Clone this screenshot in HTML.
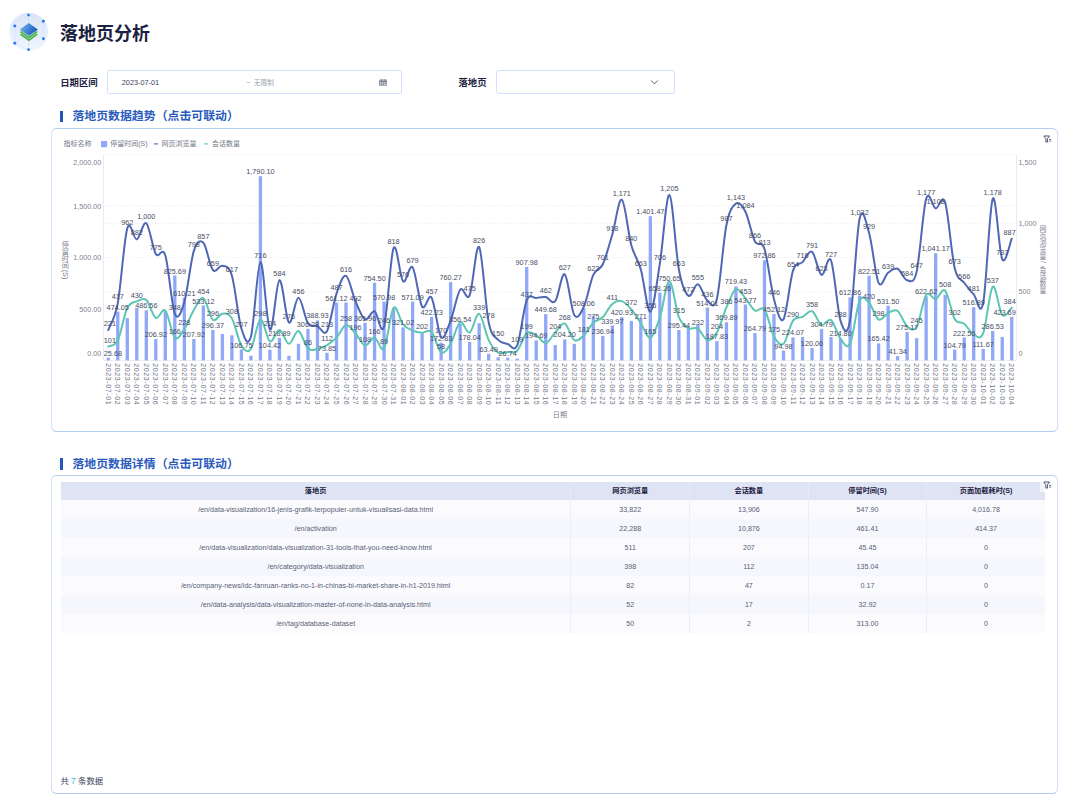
<!DOCTYPE html>
<html lang="zh-CN"><head><meta charset="utf-8"><title>落地页分析</title>
<style>
html,body{margin:0;padding:0;background:#fff}
body{width:1080px;height:802px;position:relative;overflow:hidden;font-family:"Liberation Sans", "Noto Sans CJK SC", sans-serif;color:#1b2242}
.abs{position:absolute}
.title{left:60px;top:21.4px;font-size:18px;font-weight:700;line-height:27px;color:#1b2140;white-space:nowrap;letter-spacing:0}
.flabel{font-size:9.4px;font-weight:700;color:#1b2140;line-height:22px;top:71.8px;white-space:nowrap}
.box{box-sizing:border-box;border:1.5px solid #d3defa;border-radius:2.5px;background:#fff;height:24px;top:69.9px}
.sect{font-size:11.9px;font-weight:700;color:#2a5bbd;white-space:nowrap;line-height:14px}
.sbar{width:3px;height:11.2px;background:#2456b8}
.card{box-sizing:border-box;border:1px solid #d0e0f6;border-top-color:#b1cdf0;border-bottom-color:#b1cdf0;border-radius:5.5px;background:#fff;left:51px;width:1006.6px}
.tbl{position:absolute;left:60.8px;top:481.8px;width:984.1px}
.tr{display:flex;height:18.95px}
.tr.th{height:18.3px;background:#dfe4f5;font-weight:700;color:#1b2140}
.tr.odd{background:#fbfbfe}
.tr.even{background:#f6f7fc}
.c{box-sizing:border-box;padding-top:1.4px;text-align:center;font-size:7.15px;line-height:18.95px;color:#585e76;white-space:nowrap;border-left:1px solid #eceef8;width:118.6px}
.th .c{padding-top:0;color:#1b2140;line-height:18.3px;font-size:7.2px;border-left-color:#e6eaf7}
.c0{width:509.7px;border-left:none}
.tr .c4{width:118.6px}
.total{left:60.4px;top:776.2px;font-size:8.4px;line-height:10px;color:#3a405a;white-space:nowrap}
.total b{font-weight:400;color:#3fb3d3}
</style></head><body>

<!-- logo -->
<svg class="abs" style="left:8px;top:11px" width="42" height="42" viewBox="0 0 42 42">
<defs>
<linearGradient id="lg0" x1="0" y1="0" x2="0" y2="1"><stop offset="0" stop-color="#dae6f9"/><stop offset="0.55" stop-color="#e6eefb"/><stop offset="1" stop-color="#f2f7fe"/></linearGradient>
<linearGradient id="lg1" x1="0" y1="0.3" x2="1" y2="0.7"><stop offset="0" stop-color="#74aeec"/><stop offset="0.55" stop-color="#3b7dd6"/><stop offset="1" stop-color="#1b4fb0"/></linearGradient>
</defs>
<circle cx="20.7" cy="21" r="19.3" fill="url(#lg0)"/>
<g stroke="#c6dcf9" stroke-width="0.45" fill="none" opacity="0.9"><path d="M20.55 4.1L35.4 10.3V27.7M6.8 15V32.3L20.55 38.6"/><path d="M20.55 19V4.1M20.55 21L35.4 27.7M20.55 21L6.8 32.3M20.55 19L35.4 10.3M20.55 19L6.8 15M20.55 21V38.6"/></g>
<g fill="#2577f4"><circle cx="20.55" cy="4.1" r="1.45"/><circle cx="35.4" cy="10.3" r="1.45"/><circle cx="35.4" cy="27.7" r="1.45"/><circle cx="20.55" cy="38.6" r="1.45"/><circle cx="6.8" cy="32.3" r="1.45"/><circle cx="6.8" cy="15" r="1.45"/></g>
<path d="M20.85 17.35l9 6.45-9 6.45-9-6.45z" fill="#45b04a"/>
<path d="M20.85 15.3l9 6.45-9 6.45-9-6.45z" fill="#c4e8c6"/>
<path d="M20.85 14.65l9 6.45-9 6.45-9-6.45z" fill="#45b04a"/>
<path d="M20.85 12.6l9 6.45-9 6.45-9-6.45z" fill="#d5ecd9"/>
<path d="M20.85 11.95l9 6.45-9 6.45-9-6.45z" fill="url(#lg1)"/>
</svg>
<div class="abs title">落地页分析</div>

<!-- filters -->
<div class="abs flabel" style="left:60.2px">日期区间</div>
<div class="abs box" style="left:107.1px;width:295.1px"></div>
<div class="abs" style="left:121.8px;top:72.3px;line-height:22px;font-size:7.3px;color:#3a405a">2023-07-01</div>
<div class="abs" style="left:246.2px;top:72.1px;line-height:22px;font-size:6.7px;color:#9a9fae;white-space:nowrap">~ &nbsp;无限制</div>
<svg class="abs" style="left:379px;top:78.6px" width="8.4" height="7.8" viewBox="0 0 8.4 7.8"><rect x="0.6" y="1" width="7.2" height="6.1" rx="0.7" fill="#c9ccd6" stroke="#7d8296" stroke-width="0.9"/><path d="M0.6 2.6h7.2" stroke="#7d8296" stroke-width="1.2"/><path d="M2.4 0.2v1.6M6 0.2v1.6" stroke="#7d8296" stroke-width="0.9"/><path d="M2 4.3h1.3M3.9 4.3h1.3M5.6 4.3h1.1M2 5.7h1.3M3.9 5.7h1.3" stroke="#6f7488" stroke-width="0.7"/></svg>
<div class="abs flabel" style="left:458.4px">落地页</div>
<div class="abs box" style="left:495.5px;width:179.3px"></div>
<svg class="abs" style="left:649.8px;top:79px" width="9" height="7" viewBox="0 0 9 7"><path d="M1.3 1.5l3.2 3.4 3.2-3.4" fill="none" stroke="#555b73" stroke-width="1.0"/></svg>

<!-- section 1 -->
<div class="abs sbar" style="left:60.3px;top:110.7px"></div>
<div class="abs sect" style="left:72.4px;top:109.2px">落地页数据趋势（点击可联动）</div>
<div class="abs card" style="top:128px;height:303.9px"></div>
<div class="abs" style="left:1043.2px;top:135px;line-height:0"><svg width="9" height="8.4" viewBox="0 0 9 8.4"><path d="M0.8 1h5.7L4.45 3.7v3.4H2.85V3.7z" fill="none" stroke="#4f5573" stroke-width="1" stroke-linejoin="round"/><path d="M6.1 4.4h2.1M6.1 6.1h2.1" stroke="#4f5573" stroke-width="0.85" fill="none"/></svg></div>
<svg class="chart" width="1080" height="802" viewBox="0 0 1080 802" style="position:absolute;left:0;top:0" font-family='&quot;Liberation Sans&quot;, &quot;Noto Sans CJK SC&quot;, sans-serif'>
<g stroke="#e3e5ea" stroke-width="0.6" stroke-dasharray="1.6 1.6" fill="none">
<line x1="103.5" x2="1016.5" y1="308.95" y2="308.95"/>
<line x1="103.5" x2="1016.5" y1="257.50" y2="257.50"/>
<line x1="103.5" x2="1016.5" y1="206.05" y2="206.05"/>
<line x1="103.5" x2="1016.5" y1="154.60" y2="154.60"/>
<line x1="103.5" x2="1016.5" y1="291.80" y2="291.80"/>
<line x1="103.5" x2="1016.5" y1="223.20" y2="223.20"/>
</g>
<g stroke="#dfe2ea" stroke-width="0.7" fill="none"><line x1="103.5" x2="103.5" y1="154.6" y2="360.4"/><line x1="1016.5" x2="1016.5" y1="154.6" y2="360.4"/><line x1="103.5" x2="1016.5" y1="360.4" y2="360.4"/></g>
<g fill="#8fa8f7">
<rect x="106.61" y="357.76" width="3.3" height="2.64"/>
<rect x="116.12" y="311.62" width="3.3" height="48.78"/>
<rect x="125.63" y="318.11" width="3.3" height="42.29"/>
<rect x="135.14" y="307.92" width="3.3" height="52.48"/>
<rect x="144.65" y="310.33" width="3.3" height="50.07"/>
<rect x="154.16" y="339.11" width="3.3" height="21.29"/>
<rect x="163.67" y="311.21" width="3.3" height="49.19"/>
<rect x="173.18" y="275.44" width="3.3" height="84.96"/>
<rect x="182.69" y="297.61" width="3.3" height="62.79"/>
<rect x="192.20" y="339.01" width="3.3" height="21.39"/>
<rect x="201.71" y="305.54" width="3.3" height="54.86"/>
<rect x="211.22" y="329.90" width="3.3" height="30.50"/>
<rect x="220.73" y="334.06" width="3.3" height="26.34"/>
<rect x="230.24" y="335.29" width="3.3" height="25.11"/>
<rect x="239.75" y="349.42" width="3.3" height="10.98"/>
<rect x="249.26" y="355.77" width="3.3" height="4.63"/>
<rect x="258.77" y="176.20" width="3.3" height="184.20"/>
<rect x="268.28" y="349.66" width="3.3" height="10.74"/>
<rect x="277.79" y="337.88" width="3.3" height="22.52"/>
<rect x="287.30" y="355.77" width="3.3" height="4.63"/>
<rect x="296.81" y="343.83" width="3.3" height="16.57"/>
<rect x="306.32" y="328.88" width="3.3" height="31.52"/>
<rect x="315.83" y="320.38" width="3.3" height="40.02"/>
<rect x="325.34" y="352.80" width="3.3" height="7.60"/>
<rect x="334.86" y="302.66" width="3.3" height="57.74"/>
<rect x="344.37" y="302.47" width="3.3" height="57.93"/>
<rect x="353.88" y="298.66" width="3.3" height="61.74"/>
<rect x="363.39" y="322.74" width="3.3" height="37.66"/>
<rect x="372.90" y="282.76" width="3.3" height="77.64"/>
<rect x="382.41" y="301.65" width="3.3" height="58.75"/>
<rect x="391.92" y="308.95" width="3.3" height="51.45"/>
<rect x="401.43" y="327.37" width="3.3" height="33.03"/>
<rect x="410.94" y="301.63" width="3.3" height="58.77"/>
<rect x="420.45" y="333.13" width="3.3" height="27.27"/>
<rect x="429.96" y="316.95" width="3.3" height="43.45"/>
<rect x="439.47" y="342.62" width="3.3" height="17.78"/>
<rect x="448.98" y="282.17" width="3.3" height="78.23"/>
<rect x="458.49" y="323.71" width="3.3" height="36.69"/>
<rect x="468.00" y="342.08" width="3.3" height="18.32"/>
<rect x="477.51" y="323.15" width="3.3" height="37.25"/>
<rect x="487.02" y="353.87" width="3.3" height="6.53"/>
<rect x="496.53" y="357.31" width="3.3" height="3.09"/>
<rect x="506.04" y="357.65" width="3.3" height="2.75"/>
<rect x="515.55" y="358.65" width="3.3" height="1.75"/>
<rect x="525.06" y="266.97" width="3.3" height="93.43"/>
<rect x="534.57" y="340.37" width="3.3" height="20.03"/>
<rect x="544.08" y="314.13" width="3.3" height="46.27"/>
<rect x="553.59" y="345.07" width="3.3" height="15.33"/>
<rect x="563.11" y="339.39" width="3.3" height="21.01"/>
<rect x="572.62" y="343.83" width="3.3" height="16.57"/>
<rect x="582.13" y="308.12" width="3.3" height="52.28"/>
<rect x="591.64" y="316.26" width="3.3" height="44.14"/>
<rect x="601.15" y="336.02" width="3.3" height="24.38"/>
<rect x="610.66" y="325.42" width="3.3" height="34.98"/>
<rect x="620.17" y="317.09" width="3.3" height="43.31"/>
<rect x="629.68" y="320.89" width="3.3" height="39.51"/>
<rect x="639.19" y="318.11" width="3.3" height="42.29"/>
<rect x="648.70" y="216.19" width="3.3" height="144.21"/>
<rect x="658.21" y="292.67" width="3.3" height="67.73"/>
<rect x="667.72" y="283.16" width="3.3" height="77.24"/>
<rect x="677.23" y="330.00" width="3.3" height="30.40"/>
<rect x="686.74" y="328.19" width="3.3" height="32.21"/>
<rect x="696.25" y="325.00" width="3.3" height="35.40"/>
<rect x="705.76" y="307.51" width="3.3" height="52.89"/>
<rect x="715.27" y="341.07" width="3.3" height="19.33"/>
<rect x="724.78" y="322.34" width="3.3" height="38.06"/>
<rect x="734.29" y="286.37" width="3.3" height="74.03"/>
<rect x="743.80" y="304.45" width="3.3" height="55.95"/>
<rect x="753.31" y="333.15" width="3.3" height="27.25"/>
<rect x="762.82" y="260.29" width="3.3" height="100.11"/>
<rect x="772.33" y="313.88" width="3.3" height="46.52"/>
<rect x="781.84" y="350.63" width="3.3" height="9.77"/>
<rect x="791.36" y="337.34" width="3.3" height="23.06"/>
<rect x="800.87" y="336.94" width="3.3" height="23.46"/>
<rect x="810.38" y="348.05" width="3.3" height="12.35"/>
<rect x="819.89" y="329.04" width="3.3" height="31.36"/>
<rect x="829.40" y="336.94" width="3.3" height="23.46"/>
<rect x="838.91" y="338.30" width="3.3" height="22.10"/>
<rect x="848.42" y="297.34" width="3.3" height="63.06"/>
<rect x="857.93" y="295.57" width="3.3" height="64.83"/>
<rect x="867.44" y="275.76" width="3.3" height="84.64"/>
<rect x="876.95" y="343.38" width="3.3" height="17.02"/>
<rect x="886.46" y="305.71" width="3.3" height="54.69"/>
<rect x="895.97" y="356.15" width="3.3" height="4.25"/>
<rect x="905.48" y="332.09" width="3.3" height="28.31"/>
<rect x="914.99" y="338.17" width="3.3" height="22.23"/>
<rect x="924.50" y="296.33" width="3.3" height="64.07"/>
<rect x="934.01" y="253.26" width="3.3" height="107.14"/>
<rect x="943.52" y="294.85" width="3.3" height="65.55"/>
<rect x="953.03" y="349.62" width="3.3" height="10.78"/>
<rect x="962.54" y="337.50" width="3.3" height="22.90"/>
<rect x="972.05" y="307.21" width="3.3" height="53.19"/>
<rect x="981.56" y="348.91" width="3.3" height="11.49"/>
<rect x="991.07" y="330.92" width="3.3" height="29.48"/>
<rect x="1000.58" y="336.94" width="3.3" height="23.46"/>
<rect x="1010.09" y="316.80" width="3.3" height="43.60"/>
</g>
<path d="M108.26,346.54C109.84,345.54 114.60,346.91 117.77,340.51C120.94,334.10 124.11,314.64 127.28,308.13C130.45,301.61 133.62,302.75 136.79,301.40C139.96,300.05 143.13,297.29 146.30,300.03C149.47,302.78 152.64,316.11 155.81,317.87C158.98,319.63 162.15,307.30 165.32,310.60C168.49,313.89 171.66,334.54 174.83,337.62C178.00,340.71 181.17,333.74 184.34,329.12C187.51,324.50 190.68,315.08 193.85,309.91C197.02,304.74 200.19,296.46 203.36,298.11C206.53,299.76 209.70,317.18 212.87,319.79C216.04,322.40 219.21,314.03 222.38,313.75C225.55,313.48 228.72,312.81 231.89,318.14C235.06,323.47 238.23,340.60 241.40,345.72C244.57,350.84 247.74,353.24 250.91,348.88C254.08,344.51 257.25,320.77 260.42,319.51C263.59,318.26 266.76,339.57 269.93,341.33C273.10,343.09 276.27,329.67 279.44,330.08C282.61,330.49 285.78,343.64 288.95,343.80C292.12,343.96 295.29,330.24 298.46,331.04C301.63,331.84 304.80,345.63 307.97,348.60C311.14,351.57 314.31,349.47 317.48,348.88C320.65,348.28 323.82,346.91 326.99,345.03C330.16,343.16 333.34,340.96 336.51,337.62C339.68,334.29 342.85,325.69 346.02,325.00C349.19,324.32 352.36,330.08 355.53,333.51C358.70,336.94 361.87,344.90 365.04,345.58C368.21,346.27 371.38,337.19 374.55,337.62C377.72,338.06 380.89,353.13 384.06,348.19C387.23,343.25 390.40,311.95 393.57,307.99C396.74,304.03 399.91,320.68 403.08,324.45C406.25,328.23 409.42,329.26 412.59,330.63C415.76,332.00 418.93,332.48 422.10,332.69C425.27,332.89 428.44,328.57 431.61,331.86C434.78,335.16 437.95,350.45 441.12,352.44C444.29,354.43 447.46,348.83 450.63,343.80C453.80,338.77 456.97,324.13 460.14,322.26C463.31,320.38 466.48,333.94 469.65,332.55C472.82,331.15 475.99,312.63 479.16,313.89C482.33,315.15 485.50,333.65 488.67,340.09C491.84,346.54 495.01,350.59 498.18,352.58C501.35,354.57 504.52,352.33 507.69,352.03C510.86,351.73 514.03,353.95 517.20,350.80C520.37,347.64 523.54,335.73 526.71,333.10C529.88,330.47 533.05,333.33 536.22,335.02C539.39,336.71 542.56,343.68 545.73,343.25C548.90,342.82 552.07,335.68 555.24,332.41C558.41,329.14 561.59,322.35 564.76,323.63C567.93,324.91 571.10,338.10 574.27,340.09C577.44,342.08 580.61,338.47 583.78,335.57C586.95,332.66 590.12,325.73 593.29,322.67C596.46,319.61 599.63,320.29 602.80,317.18C605.97,314.07 609.14,306.69 612.31,304.01C615.48,301.34 618.65,300.24 621.82,301.13C624.99,302.02 628.16,305.68 631.33,309.36C634.50,313.04 637.67,318.49 640.84,323.22C644.01,327.95 647.18,338.72 650.35,337.76C653.52,336.80 656.69,326.85 659.86,317.46C663.03,308.06 666.20,281.42 669.37,281.37C672.54,281.33 675.71,309.38 678.88,317.18C682.05,324.98 685.22,326.26 688.39,328.16C691.56,330.06 694.73,326.58 697.90,328.57C701.07,330.56 704.24,339.45 707.41,340.09C710.58,340.73 713.75,337.85 716.92,332.41C720.09,326.97 723.26,314.67 726.43,307.44C729.60,300.21 732.77,290.59 735.94,289.06C739.11,287.52 742.28,294.66 745.45,298.25C748.62,301.84 751.79,308.74 754.96,310.60C758.13,312.45 761.30,305.06 764.47,309.36C767.64,313.66 770.81,330.65 773.98,336.39C777.15,342.13 780.32,346.43 783.49,343.80C786.66,341.17 789.84,325.09 793.01,320.61C796.18,316.13 799.35,318.46 802.52,316.91C805.69,315.35 808.86,309.93 812.03,311.28C815.20,312.63 818.37,323.54 821.54,325.00C824.71,326.47 827.88,317.75 831.05,320.06C834.22,322.37 837.39,334.90 840.56,338.86C843.73,342.82 846.90,350.16 850.07,343.80C853.24,337.44 856.41,307.56 859.58,300.72C862.75,293.88 865.92,299.64 869.09,302.78C872.26,305.91 875.43,317.80 878.60,319.51C881.77,321.23 884.94,314.48 888.11,313.07C891.28,311.65 894.45,308.81 897.62,311.01C900.79,313.20 903.96,323.61 907.13,326.24C910.30,328.87 913.47,332.00 916.64,326.79C919.81,321.57 922.98,299.60 926.15,294.96C929.32,290.31 932.49,299.64 935.66,298.93C938.83,298.23 942.00,287.36 945.17,290.70C948.34,294.04 951.51,313.45 954.68,318.97C957.85,324.48 961.02,321.18 964.19,323.77C967.36,326.35 970.53,332.89 973.70,334.47C976.87,336.05 980.04,341.19 983.21,333.23C986.38,325.28 989.55,289.76 992.72,286.72C995.89,283.68 999.06,311.49 1002.23,314.99C1005.40,318.49 1010.16,308.93 1011.74,307.72" fill="none" stroke="#5dc5b4" stroke-width="2.0" stroke-linecap="round" stroke-linejoin="round"/>
<path d="M108.26,330.08C109.84,325.60 114.60,320.13 117.77,303.19C120.94,286.24 124.11,239.05 127.28,228.41C130.45,217.78 133.62,240.26 136.79,239.39C139.96,238.52 143.13,220.75 146.30,223.20C149.47,225.65 152.64,248.70 155.81,254.07C158.98,259.44 162.15,245.49 165.32,255.44C168.49,265.39 171.66,305.98 174.83,313.75C178.00,321.53 181.17,312.56 184.34,302.09C187.51,291.62 190.68,260.79 193.85,250.91C197.02,241.04 200.19,239.64 203.36,242.82C206.53,246.00 209.70,266.17 212.87,269.99C216.04,273.80 219.21,264.77 222.38,265.73C225.55,266.69 228.72,265.27 231.89,275.75C235.06,286.22 238.23,318.39 241.40,328.57C244.57,338.75 247.74,347.87 250.91,336.80C254.08,325.73 257.25,263.35 260.42,262.16C263.59,260.98 266.76,326.65 269.93,329.67C273.10,332.69 276.27,281.46 279.44,280.28C282.61,279.09 285.78,319.61 288.95,322.53C292.12,325.46 295.29,297.75 298.46,297.84C301.63,297.93 304.80,318.35 307.97,323.08C311.14,327.81 314.31,324.89 317.48,326.24C320.65,327.59 323.82,336.62 326.99,331.18C330.16,325.73 333.34,302.80 336.51,293.58C339.68,284.37 342.85,274.58 346.02,275.88C349.19,277.19 352.36,294.16 355.53,301.40C358.70,308.65 361.87,317.73 365.04,319.38C368.21,321.02 371.38,310.07 374.55,311.28C377.72,312.49 380.89,337.17 384.06,326.65C387.23,316.13 390.40,255.72 393.57,248.17C396.74,240.62 399.91,278.19 403.08,281.37C406.25,284.55 409.42,263.03 412.59,267.24C415.76,271.45 418.93,301.54 422.10,306.62C425.27,311.69 428.44,292.62 431.61,297.70C434.78,302.78 437.95,333.26 441.12,337.08C444.29,340.89 447.46,328.50 450.63,320.61C453.80,312.72 456.97,293.97 460.14,289.74C463.31,285.51 466.48,302.34 469.65,295.23C472.82,288.12 475.99,242.57 479.16,247.07C482.33,251.58 485.50,306.80 488.67,322.26C491.84,337.72 495.01,336.18 498.18,339.82C501.35,343.46 504.52,343.14 507.69,344.07C510.86,345.01 514.03,352.72 517.20,345.45C520.37,338.17 523.54,308.36 526.71,300.44C529.88,292.53 533.05,298.55 536.22,297.97C539.39,297.40 542.56,296.49 545.73,297.01C548.90,297.54 552.07,304.90 555.24,301.13C558.41,297.36 561.59,272.04 564.76,274.38C567.93,276.71 571.10,309.70 574.27,315.12C577.44,320.54 580.61,313.59 583.78,306.89C586.95,300.19 590.12,282.04 593.29,274.92C596.46,267.81 599.63,270.97 602.80,264.22C605.97,257.48 609.14,245.20 612.31,234.45C615.48,223.70 618.65,197.96 621.82,199.74C624.99,201.52 628.16,233.54 631.33,245.15C634.50,256.77 637.67,258.35 640.84,269.44C644.01,280.53 647.18,312.68 650.35,311.69C653.52,310.71 656.69,282.97 659.86,263.54C663.03,244.10 666.20,194.09 669.37,195.07C672.54,196.06 675.71,252.68 678.88,269.44C682.05,286.20 685.22,293.17 688.39,295.64C691.56,298.11 694.73,283.43 697.90,284.25C701.07,285.08 704.24,298.18 707.41,300.58C710.58,302.98 713.75,311.26 716.92,298.66C720.09,286.06 723.26,240.83 726.43,224.98C729.60,209.14 732.77,205.80 735.94,203.58C739.11,201.36 742.28,205.34 745.45,211.68C748.62,218.01 751.79,235.39 754.96,241.58C758.13,247.78 761.30,239.25 764.47,248.86C767.64,258.46 770.81,287.48 773.98,299.21C777.15,310.94 780.32,324.00 783.49,319.24C786.66,314.48 789.84,280.18 793.01,270.67C796.18,261.16 799.35,265.30 802.52,262.16C805.69,259.03 808.86,249.75 812.03,251.87C815.20,254.00 818.37,273.46 821.54,274.92C824.71,276.39 827.88,253.00 831.05,260.66C834.22,268.32 837.39,310.89 840.56,320.89C843.73,330.88 846.90,337.62 850.07,320.61C853.24,303.60 856.41,233.42 859.58,218.81C862.75,204.20 865.92,222.26 869.09,232.94C872.26,243.62 875.43,276.25 878.60,282.88C881.77,289.51 884.94,275.08 888.11,272.73C891.28,270.37 894.45,267.49 897.62,268.75C900.79,270.01 903.96,279.79 907.13,280.28C910.30,280.76 913.47,285.19 916.64,271.63C919.81,258.07 922.98,209.46 926.15,198.92C929.32,188.37 932.49,207.76 935.66,208.38C938.83,209.00 942.00,192.67 945.17,202.62C948.34,212.57 951.51,254.71 954.68,268.06C957.85,281.42 961.02,278.35 964.19,282.74C967.36,287.14 970.53,291.07 973.70,294.41C976.87,297.75 980.04,318.71 983.21,302.78C986.38,286.84 989.55,206.03 992.72,198.78C995.89,191.53 999.06,252.63 1002.23,259.28C1005.40,265.94 1010.16,242.13 1011.74,238.70" fill="none" stroke="#4f67b5" stroke-width="2.0" stroke-linecap="round" stroke-linejoin="round"/>
<g font-size="7.2" fill="#7d8291">
<text x="101.3" y="164.60" text-anchor="end">2,000.00</text>
<text x="101.3" y="208.65" text-anchor="end">1,500.00</text>
<text x="101.3" y="260.10" text-anchor="end">1,000.00</text>
<text x="101.3" y="311.55" text-anchor="end">500.00</text>
<text x="101.3" y="355.80" text-anchor="end">0.00</text>
<text x="1018.5" y="164.60">1,500</text>
<text x="1018.5" y="225.80">1,000</text>
<text x="1018.5" y="294.40">500</text>
<text x="1018.5" y="355.80">0</text>
</g>
<g font-size="7" fill="#717688">
<text transform="translate(105.76,363.2) rotate(90)" textLength="41.4" lengthAdjust="spacing">2023-07-01</text>
<text transform="translate(115.27,363.2) rotate(90)" textLength="41.4" lengthAdjust="spacing">2023-07-02</text>
<text transform="translate(124.78,363.2) rotate(90)" textLength="41.4" lengthAdjust="spacing">2023-07-03</text>
<text transform="translate(134.29,363.2) rotate(90)" textLength="41.4" lengthAdjust="spacing">2023-07-04</text>
<text transform="translate(143.80,363.2) rotate(90)" textLength="41.4" lengthAdjust="spacing">2023-07-05</text>
<text transform="translate(153.31,363.2) rotate(90)" textLength="41.4" lengthAdjust="spacing">2023-07-06</text>
<text transform="translate(162.82,363.2) rotate(90)" textLength="41.4" lengthAdjust="spacing">2023-07-07</text>
<text transform="translate(172.33,363.2) rotate(90)" textLength="41.4" lengthAdjust="spacing">2023-07-08</text>
<text transform="translate(181.84,363.2) rotate(90)" textLength="41.4" lengthAdjust="spacing">2023-07-09</text>
<text transform="translate(191.35,363.2) rotate(90)" textLength="41.4" lengthAdjust="spacing">2023-07-10</text>
<text transform="translate(200.86,363.2) rotate(90)" textLength="41.4" lengthAdjust="spacing">2023-07-11</text>
<text transform="translate(210.37,363.2) rotate(90)" textLength="41.4" lengthAdjust="spacing">2023-07-12</text>
<text transform="translate(219.88,363.2) rotate(90)" textLength="41.4" lengthAdjust="spacing">2023-07-13</text>
<text transform="translate(229.39,363.2) rotate(90)" textLength="41.4" lengthAdjust="spacing">2023-07-14</text>
<text transform="translate(238.90,363.2) rotate(90)" textLength="41.4" lengthAdjust="spacing">2023-07-15</text>
<text transform="translate(248.41,363.2) rotate(90)" textLength="41.4" lengthAdjust="spacing">2023-07-16</text>
<text transform="translate(257.92,363.2) rotate(90)" textLength="41.4" lengthAdjust="spacing">2023-07-17</text>
<text transform="translate(267.43,363.2) rotate(90)" textLength="41.4" lengthAdjust="spacing">2023-07-18</text>
<text transform="translate(276.94,363.2) rotate(90)" textLength="41.4" lengthAdjust="spacing">2023-07-19</text>
<text transform="translate(286.45,363.2) rotate(90)" textLength="41.4" lengthAdjust="spacing">2023-07-20</text>
<text transform="translate(295.96,363.2) rotate(90)" textLength="41.4" lengthAdjust="spacing">2023-07-21</text>
<text transform="translate(305.47,363.2) rotate(90)" textLength="41.4" lengthAdjust="spacing">2023-07-22</text>
<text transform="translate(314.98,363.2) rotate(90)" textLength="41.4" lengthAdjust="spacing">2023-07-23</text>
<text transform="translate(324.49,363.2) rotate(90)" textLength="41.4" lengthAdjust="spacing">2023-07-24</text>
<text transform="translate(334.01,363.2) rotate(90)" textLength="41.4" lengthAdjust="spacing">2023-07-25</text>
<text transform="translate(343.52,363.2) rotate(90)" textLength="41.4" lengthAdjust="spacing">2023-07-26</text>
<text transform="translate(353.03,363.2) rotate(90)" textLength="41.4" lengthAdjust="spacing">2023-07-27</text>
<text transform="translate(362.54,363.2) rotate(90)" textLength="41.4" lengthAdjust="spacing">2023-07-28</text>
<text transform="translate(372.05,363.2) rotate(90)" textLength="41.4" lengthAdjust="spacing">2023-07-29</text>
<text transform="translate(381.56,363.2) rotate(90)" textLength="41.4" lengthAdjust="spacing">2023-07-30</text>
<text transform="translate(391.07,363.2) rotate(90)" textLength="41.4" lengthAdjust="spacing">2023-07-31</text>
<text transform="translate(400.58,363.2) rotate(90)" textLength="41.4" lengthAdjust="spacing">2023-08-01</text>
<text transform="translate(410.09,363.2) rotate(90)" textLength="41.4" lengthAdjust="spacing">2023-08-02</text>
<text transform="translate(419.60,363.2) rotate(90)" textLength="41.4" lengthAdjust="spacing">2023-08-03</text>
<text transform="translate(429.11,363.2) rotate(90)" textLength="41.4" lengthAdjust="spacing">2023-08-04</text>
<text transform="translate(438.62,363.2) rotate(90)" textLength="41.4" lengthAdjust="spacing">2023-08-05</text>
<text transform="translate(448.13,363.2) rotate(90)" textLength="41.4" lengthAdjust="spacing">2023-08-06</text>
<text transform="translate(457.64,363.2) rotate(90)" textLength="41.4" lengthAdjust="spacing">2023-08-07</text>
<text transform="translate(467.15,363.2) rotate(90)" textLength="41.4" lengthAdjust="spacing">2023-08-08</text>
<text transform="translate(476.66,363.2) rotate(90)" textLength="41.4" lengthAdjust="spacing">2023-08-09</text>
<text transform="translate(486.17,363.2) rotate(90)" textLength="41.4" lengthAdjust="spacing">2023-08-10</text>
<text transform="translate(495.68,363.2) rotate(90)" textLength="41.4" lengthAdjust="spacing">2023-08-11</text>
<text transform="translate(505.19,363.2) rotate(90)" textLength="41.4" lengthAdjust="spacing">2023-08-12</text>
<text transform="translate(514.70,363.2) rotate(90)" textLength="41.4" lengthAdjust="spacing">2023-08-13</text>
<text transform="translate(524.21,363.2) rotate(90)" textLength="41.4" lengthAdjust="spacing">2023-08-14</text>
<text transform="translate(533.72,363.2) rotate(90)" textLength="41.4" lengthAdjust="spacing">2023-08-15</text>
<text transform="translate(543.23,363.2) rotate(90)" textLength="41.4" lengthAdjust="spacing">2023-08-16</text>
<text transform="translate(552.74,363.2) rotate(90)" textLength="41.4" lengthAdjust="spacing">2023-08-17</text>
<text transform="translate(562.26,363.2) rotate(90)" textLength="41.4" lengthAdjust="spacing">2023-08-18</text>
<text transform="translate(571.77,363.2) rotate(90)" textLength="41.4" lengthAdjust="spacing">2023-08-19</text>
<text transform="translate(581.28,363.2) rotate(90)" textLength="41.4" lengthAdjust="spacing">2023-08-20</text>
<text transform="translate(590.79,363.2) rotate(90)" textLength="41.4" lengthAdjust="spacing">2023-08-21</text>
<text transform="translate(600.30,363.2) rotate(90)" textLength="41.4" lengthAdjust="spacing">2023-08-22</text>
<text transform="translate(609.81,363.2) rotate(90)" textLength="41.4" lengthAdjust="spacing">2023-08-23</text>
<text transform="translate(619.32,363.2) rotate(90)" textLength="41.4" lengthAdjust="spacing">2023-08-24</text>
<text transform="translate(628.83,363.2) rotate(90)" textLength="41.4" lengthAdjust="spacing">2023-08-25</text>
<text transform="translate(638.34,363.2) rotate(90)" textLength="41.4" lengthAdjust="spacing">2023-08-26</text>
<text transform="translate(647.85,363.2) rotate(90)" textLength="41.4" lengthAdjust="spacing">2023-08-27</text>
<text transform="translate(657.36,363.2) rotate(90)" textLength="41.4" lengthAdjust="spacing">2023-08-28</text>
<text transform="translate(666.87,363.2) rotate(90)" textLength="41.4" lengthAdjust="spacing">2023-08-29</text>
<text transform="translate(676.38,363.2) rotate(90)" textLength="41.4" lengthAdjust="spacing">2023-08-30</text>
<text transform="translate(685.89,363.2) rotate(90)" textLength="41.4" lengthAdjust="spacing">2023-08-31</text>
<text transform="translate(695.40,363.2) rotate(90)" textLength="41.4" lengthAdjust="spacing">2023-09-01</text>
<text transform="translate(704.91,363.2) rotate(90)" textLength="41.4" lengthAdjust="spacing">2023-09-02</text>
<text transform="translate(714.42,363.2) rotate(90)" textLength="41.4" lengthAdjust="spacing">2023-09-03</text>
<text transform="translate(723.93,363.2) rotate(90)" textLength="41.4" lengthAdjust="spacing">2023-09-04</text>
<text transform="translate(733.44,363.2) rotate(90)" textLength="41.4" lengthAdjust="spacing">2023-09-05</text>
<text transform="translate(742.95,363.2) rotate(90)" textLength="41.4" lengthAdjust="spacing">2023-09-06</text>
<text transform="translate(752.46,363.2) rotate(90)" textLength="41.4" lengthAdjust="spacing">2023-09-07</text>
<text transform="translate(761.97,363.2) rotate(90)" textLength="41.4" lengthAdjust="spacing">2023-09-08</text>
<text transform="translate(771.48,363.2) rotate(90)" textLength="41.4" lengthAdjust="spacing">2023-09-09</text>
<text transform="translate(780.99,363.2) rotate(90)" textLength="41.4" lengthAdjust="spacing">2023-09-10</text>
<text transform="translate(790.51,363.2) rotate(90)" textLength="41.4" lengthAdjust="spacing">2023-09-11</text>
<text transform="translate(800.02,363.2) rotate(90)" textLength="41.4" lengthAdjust="spacing">2023-09-12</text>
<text transform="translate(809.53,363.2) rotate(90)" textLength="41.4" lengthAdjust="spacing">2023-09-13</text>
<text transform="translate(819.04,363.2) rotate(90)" textLength="41.4" lengthAdjust="spacing">2023-09-14</text>
<text transform="translate(828.55,363.2) rotate(90)" textLength="41.4" lengthAdjust="spacing">2023-09-15</text>
<text transform="translate(838.06,363.2) rotate(90)" textLength="41.4" lengthAdjust="spacing">2023-09-16</text>
<text transform="translate(847.57,363.2) rotate(90)" textLength="41.4" lengthAdjust="spacing">2023-09-17</text>
<text transform="translate(857.08,363.2) rotate(90)" textLength="41.4" lengthAdjust="spacing">2023-09-18</text>
<text transform="translate(866.59,363.2) rotate(90)" textLength="41.4" lengthAdjust="spacing">2023-09-19</text>
<text transform="translate(876.10,363.2) rotate(90)" textLength="41.4" lengthAdjust="spacing">2023-09-20</text>
<text transform="translate(885.61,363.2) rotate(90)" textLength="41.4" lengthAdjust="spacing">2023-09-21</text>
<text transform="translate(895.12,363.2) rotate(90)" textLength="41.4" lengthAdjust="spacing">2023-09-22</text>
<text transform="translate(904.63,363.2) rotate(90)" textLength="41.4" lengthAdjust="spacing">2023-09-23</text>
<text transform="translate(914.14,363.2) rotate(90)" textLength="41.4" lengthAdjust="spacing">2023-09-24</text>
<text transform="translate(923.65,363.2) rotate(90)" textLength="41.4" lengthAdjust="spacing">2023-09-25</text>
<text transform="translate(933.16,363.2) rotate(90)" textLength="41.4" lengthAdjust="spacing">2023-09-26</text>
<text transform="translate(942.67,363.2) rotate(90)" textLength="41.4" lengthAdjust="spacing">2023-09-27</text>
<text transform="translate(952.18,363.2) rotate(90)" textLength="41.4" lengthAdjust="spacing">2023-09-28</text>
<text transform="translate(961.69,363.2) rotate(90)" textLength="41.4" lengthAdjust="spacing">2023-09-29</text>
<text transform="translate(971.20,363.2) rotate(90)" textLength="41.4" lengthAdjust="spacing">2023-09-30</text>
<text transform="translate(980.71,363.2) rotate(90)" textLength="41.4" lengthAdjust="spacing">2023-10-01</text>
<text transform="translate(990.22,363.2) rotate(90)" textLength="41.4" lengthAdjust="spacing">2023-10-02</text>
<text transform="translate(999.73,363.2) rotate(90)" textLength="41.4" lengthAdjust="spacing">2023-10-03</text>
<text transform="translate(1009.24,363.2) rotate(90)" textLength="41.4" lengthAdjust="spacing">2023-10-04</text>
</g>
<text x="560" y="417.2" font-size="7.2" fill="#7d8291" text-anchor="middle">日期</text>
<text x="65.4" y="246.74" font-size="7.2" fill="#7d8291" text-anchor="middle">停</text>
<text x="65.4" y="253.94" font-size="7.2" fill="#7d8291" text-anchor="middle">留</text>
<text x="65.4" y="261.14" font-size="7.2" fill="#7d8291" text-anchor="middle">时</text>
<text x="65.4" y="268.34" font-size="7.2" fill="#7d8291" text-anchor="middle">间</text>
<text transform="translate(62.81,269.70) rotate(90)" font-size="7.2" fill="#7d8291">(S)</text>
<text x="1043.0" y="231.18" font-size="6.85" fill="#7d8291" text-anchor="middle">网</text>
<text x="1043.0" y="238.03" font-size="6.85" fill="#7d8291" text-anchor="middle">页</text>
<text x="1043.0" y="244.88" font-size="6.85" fill="#7d8291" text-anchor="middle">浏</text>
<text x="1043.0" y="251.73" font-size="6.85" fill="#7d8291" text-anchor="middle">览</text>
<text x="1043.0" y="258.58" font-size="6.85" fill="#7d8291" text-anchor="middle">量</text>
<text transform="translate(1040.53,260.90) rotate(90)" font-size="6.85" fill="#7d8291">/</text>
<text x="1043.0" y="272.28" font-size="6.85" fill="#7d8291" text-anchor="middle">会</text>
<text x="1043.0" y="279.13" font-size="6.85" fill="#7d8291" text-anchor="middle">话</text>
<text x="1043.0" y="285.98" font-size="6.85" fill="#7d8291" text-anchor="middle">数</text>
<text x="1043.0" y="292.83" font-size="6.85" fill="#7d8291" text-anchor="middle">量</text>
<g font-size="7.3" fill="#484e66" text-anchor="middle">
<text x="112.93" y="355.86">25.68</text>
<text x="117.77" y="309.72">474.05</text>
<text x="146.30" y="308.43">486.56</text>
<text x="155.81" y="337.21">206.92</text>
<text x="174.83" y="273.54">825.69</text>
<text x="184.34" y="295.71">610.21</text>
<text x="193.85" y="337.11">207.92</text>
<text x="203.36" y="303.64">533.12</text>
<text x="212.87" y="328.00">296.37</text>
<text x="241.40" y="347.52">106.75</text>
<text x="260.42" y="174.30">1,790.10</text>
<text x="269.93" y="347.76">104.42</text>
<text x="279.44" y="335.98">218.89</text>
<text x="307.97" y="326.98">306.28</text>
<text x="317.48" y="318.48">388.93</text>
<text x="326.99" y="350.90">73.85</text>
<text x="336.51" y="300.76">561.12</text>
<text x="365.04" y="320.84">365.96</text>
<text x="374.55" y="280.86">754.50</text>
<text x="384.06" y="299.75">570.98</text>
<text x="403.08" y="325.47">321.02</text>
<text x="412.59" y="299.73">571.09</text>
<text x="431.61" y="315.05">422.23</text>
<text x="441.12" y="340.72">172.83</text>
<text x="450.63" y="280.27">760.27</text>
<text x="460.14" y="321.81">356.54</text>
<text x="469.65" y="340.18">178.04</text>
<text x="488.67" y="351.97">63.49</text>
<text x="507.69" y="355.75">26.74</text>
<text x="526.71" y="265.07">907.98</text>
<text x="536.22" y="338.47">194.69</text>
<text x="545.73" y="312.23">449.68</text>
<text x="564.76" y="337.49">204.20</text>
<text x="583.78" y="306.22">508.06</text>
<text x="602.80" y="334.12">236.94</text>
<text x="612.31" y="323.52">339.97</text>
<text x="621.82" y="315.19">420.93</text>
<text x="650.35" y="214.29">1,401.47</text>
<text x="659.86" y="290.77">658.26</text>
<text x="669.37" y="281.26">750.65</text>
<text x="678.88" y="328.10">295.44</text>
<text x="707.41" y="305.61">514.01</text>
<text x="716.92" y="339.17">187.83</text>
<text x="726.43" y="320.44">369.89</text>
<text x="735.94" y="284.47">719.43</text>
<text x="745.45" y="302.55">543.77</text>
<text x="754.96" y="331.25">264.79</text>
<text x="764.47" y="258.39">972.86</text>
<text x="773.98" y="311.98">452.12</text>
<text x="783.49" y="348.73">94.98</text>
<text x="793.01" y="335.44">224.07</text>
<text x="812.03" y="346.15">120.06</text>
<text x="821.54" y="327.14">304.79</text>
<text x="840.56" y="336.40">214.80</text>
<text x="850.07" y="295.44">612.86</text>
<text x="869.09" y="273.86">822.51</text>
<text x="878.60" y="341.48">165.42</text>
<text x="888.11" y="303.81">531.50</text>
<text x="897.62" y="354.25">41.34</text>
<text x="907.13" y="330.19">275.17</text>
<text x="926.15" y="294.43">622.62</text>
<text x="935.66" y="251.36">1,041.17</text>
<text x="954.68" y="347.72">104.79</text>
<text x="964.19" y="335.60">222.56</text>
<text x="973.70" y="305.31">516.89</text>
<text x="983.21" y="347.01">111.67</text>
<text x="992.72" y="329.02">286.53</text>
<text x="1004.54" y="314.90">423.69</text>
<text x="109.89" y="342.64">101</text>
<text x="136.79" y="297.50">430</text>
<text x="174.83" y="333.72">166</text>
<text x="184.34" y="325.22">228</text>
<text x="203.36" y="294.21">454</text>
<text x="212.87" y="315.89">296</text>
<text x="231.89" y="314.24">308</text>
<text x="260.42" y="315.61">298</text>
<text x="307.97" y="344.70">86</text>
<text x="326.99" y="341.13">112</text>
<text x="346.02" y="321.10">258</text>
<text x="355.53" y="329.61">196</text>
<text x="365.04" y="341.68">108</text>
<text x="374.55" y="333.72">166</text>
<text x="384.06" y="344.29">89</text>
<text x="422.10" y="328.79">202</text>
<text x="441.12" y="348.54">58</text>
<text x="479.16" y="309.99">339</text>
<text x="526.71" y="329.20">199</text>
<text x="555.24" y="328.51">204</text>
<text x="564.76" y="319.73">268</text>
<text x="583.78" y="331.67">181</text>
<text x="593.29" y="318.77">275</text>
<text x="612.31" y="300.11">411</text>
<text x="631.33" y="305.46">372</text>
<text x="640.84" y="319.32">271</text>
<text x="650.35" y="333.86">165</text>
<text x="678.88" y="313.28">315</text>
<text x="697.90" y="324.67">232</text>
<text x="716.92" y="328.51">204</text>
<text x="726.43" y="303.54">386</text>
<text x="745.45" y="294.35">453</text>
<text x="773.98" y="332.49">175</text>
<text x="793.01" y="316.71">290</text>
<text x="812.03" y="307.38">358</text>
<text x="869.09" y="298.88">420</text>
<text x="878.60" y="315.61">298</text>
<text x="916.64" y="322.89">245</text>
<text x="945.17" y="286.80">508</text>
<text x="954.68" y="315.07">302</text>
<text x="992.72" y="282.82">537</text>
<text x="1009.61" y="303.82">384</text>
<text x="109.89" y="326.18">221</text>
<text x="117.77" y="299.29">417</text>
<text x="127.28" y="224.51">962</text>
<text x="136.79" y="235.49">882</text>
<text x="146.30" y="219.30">1,000</text>
<text x="155.81" y="250.17">775</text>
<text x="174.83" y="309.85">348</text>
<text x="193.85" y="247.01">798</text>
<text x="203.36" y="238.92">857</text>
<text x="212.87" y="266.09">659</text>
<text x="231.89" y="271.85">617</text>
<text x="241.40" y="326.67">207</text>
<text x="260.42" y="258.26">716</text>
<text x="269.93" y="325.77">224</text>
<text x="279.44" y="276.38">584</text>
<text x="288.95" y="318.63">276</text>
<text x="298.46" y="293.94">456</text>
<text x="326.99" y="327.28">213</text>
<text x="336.51" y="289.68">487</text>
<text x="346.02" y="271.98">616</text>
<text x="355.53" y="301.00">492</text>
<text x="384.06" y="322.75">246</text>
<text x="393.57" y="244.27">818</text>
<text x="403.08" y="277.47">576</text>
<text x="412.59" y="263.34">679</text>
<text x="431.61" y="293.80">457</text>
<text x="441.12" y="333.18">170</text>
<text x="469.65" y="291.33">475</text>
<text x="479.16" y="243.17">826</text>
<text x="488.67" y="318.36">278</text>
<text x="498.18" y="335.92">150</text>
<text x="517.20" y="341.55">109</text>
<text x="526.71" y="296.54">437</text>
<text x="545.73" y="293.11">462</text>
<text x="564.76" y="270.48">627</text>
<text x="593.29" y="271.02">623</text>
<text x="602.80" y="260.32">701</text>
<text x="612.31" y="230.55">918</text>
<text x="621.82" y="195.84">1,171</text>
<text x="631.33" y="241.25">840</text>
<text x="640.84" y="265.54">663</text>
<text x="650.35" y="307.79">355</text>
<text x="659.86" y="259.64">706</text>
<text x="669.37" y="191.17">1,205</text>
<text x="678.88" y="265.54">663</text>
<text x="688.39" y="291.74">472</text>
<text x="697.90" y="280.35">555</text>
<text x="707.41" y="296.68">436</text>
<text x="726.43" y="221.08">987</text>
<text x="735.94" y="199.68">1,143</text>
<text x="745.45" y="207.78">1,084</text>
<text x="754.96" y="237.68">866</text>
<text x="764.47" y="244.96">813</text>
<text x="773.98" y="295.31">446</text>
<text x="793.01" y="266.77">654</text>
<text x="802.52" y="258.26">716</text>
<text x="812.03" y="247.97">791</text>
<text x="821.54" y="271.02">623</text>
<text x="831.05" y="256.76">727</text>
<text x="840.56" y="316.99">288</text>
<text x="859.58" y="214.91">1,032</text>
<text x="869.09" y="229.04">929</text>
<text x="888.11" y="268.83">639</text>
<text x="907.13" y="276.38">584</text>
<text x="916.64" y="267.73">647</text>
<text x="926.15" y="195.02">1,177</text>
<text x="935.66" y="204.48">1,108</text>
<text x="954.68" y="264.16">673</text>
<text x="964.19" y="278.84">566</text>
<text x="973.70" y="290.51">481</text>
<text x="992.72" y="194.88">1,178</text>
<text x="1002.23" y="255.38">737</text>
<text x="1009.61" y="234.80">887</text>
</g>
<g font-size="7" fill="#737989">
<text x="63.6" y="146.2">指标名称</text>
<rect x="101" y="141" width="6.2" height="6.2" fill="#8fa8f7"/>
<text x="110.2" y="146.2">停留时间(S)</text>
<line x1="154" x2="158.2" y1="143.9" y2="143.9" stroke="#4f67b5" stroke-width="1.1"/>
<text x="161.6" y="146.2">网页浏览量</text>
<line x1="203.9" x2="208.1" y1="143.9" y2="143.9" stroke="#5dc5b4" stroke-width="1.1"/>
<text x="212" y="146.2">会话数量</text>
</g>
</svg>

<!-- section 2 -->
<div class="abs sbar" style="left:60.3px;top:458.4px"></div>
<div class="abs sect" style="left:72.4px;top:456.9px">落地页数据详情（点击可联动）</div>
<div class="abs card" style="top:475.4px;height:318.2px"></div>
<div class="tbl">
<div class="tr th">
<div class="c c0">落地页</div>
<div class="c c1">网页浏览量</div>
<div class="c c2">会话数量</div>
<div class="c c3">停留时间(S)</div>
<div class="c c4">页面加载耗时(S)</div>
</div>
<div class="tr odd">
<div class="c c0">/en/data-visualization/16-jenis-grafik-terpopuler-untuk-visualisasi-data.html</div>
<div class="c c1">33,822</div>
<div class="c c2">13,906</div>
<div class="c c3">547.90</div>
<div class="c c4">4,016.78</div>
</div>
<div class="tr even">
<div class="c c0">/en/activation</div>
<div class="c c1">22,288</div>
<div class="c c2">10,876</div>
<div class="c c3">461.41</div>
<div class="c c4">414.37</div>
</div>
<div class="tr odd">
<div class="c c0">/en/data-visualization/data-visualization-31-tools-that-you-need-know.html</div>
<div class="c c1">511</div>
<div class="c c2">207</div>
<div class="c c3">45.45</div>
<div class="c c4">0</div>
</div>
<div class="tr even">
<div class="c c0">/en/category/data-visualization</div>
<div class="c c1">398</div>
<div class="c c2">112</div>
<div class="c c3">135.04</div>
<div class="c c4">0</div>
</div>
<div class="tr odd">
<div class="c c0">/en/company-news/idc-fanruan-ranks-no-1-in-chinas-bi-market-share-in-h1-2019.html</div>
<div class="c c1">82</div>
<div class="c c2">47</div>
<div class="c c3">0.17</div>
<div class="c c4">0</div>
</div>
<div class="tr even">
<div class="c c0">/en/data-analysis/data-visualization-master-of-none-in-data-analysis.html</div>
<div class="c c1">52</div>
<div class="c c2">17</div>
<div class="c c3">32.92</div>
<div class="c c4">0</div>
</div>
<div class="tr odd">
<div class="c c0">/en/tag/database-dataset</div>
<div class="c c1">50</div>
<div class="c c2">2</div>
<div class="c c3">313.00</div>
<div class="c c4">0</div>
</div>
</div>
<div class="abs" style="left:1040.2px;top:477px;width:15px;height:15.2px;background:rgba(255,255,255,.62);line-height:0"></div><div class="abs" style="left:1045.4px;top:477px;width:10px;height:15.2px;background:#fff"></div><div class="abs" style="left:1043.1px;top:481px;line-height:0"><svg width="9" height="8.4" viewBox="0 0 9 8.4"><path d="M0.8 1h5.7L4.45 3.7v3.4H2.85V3.7z" fill="none" stroke="#4f5573" stroke-width="1" stroke-linejoin="round"/><path d="M6.1 4.4h2.1M6.1 6.1h2.1" stroke="#4f5573" stroke-width="0.85" fill="none"/></svg></div>
<div class="abs total">共 <b>7</b> 条数据</div>
</body></html>
